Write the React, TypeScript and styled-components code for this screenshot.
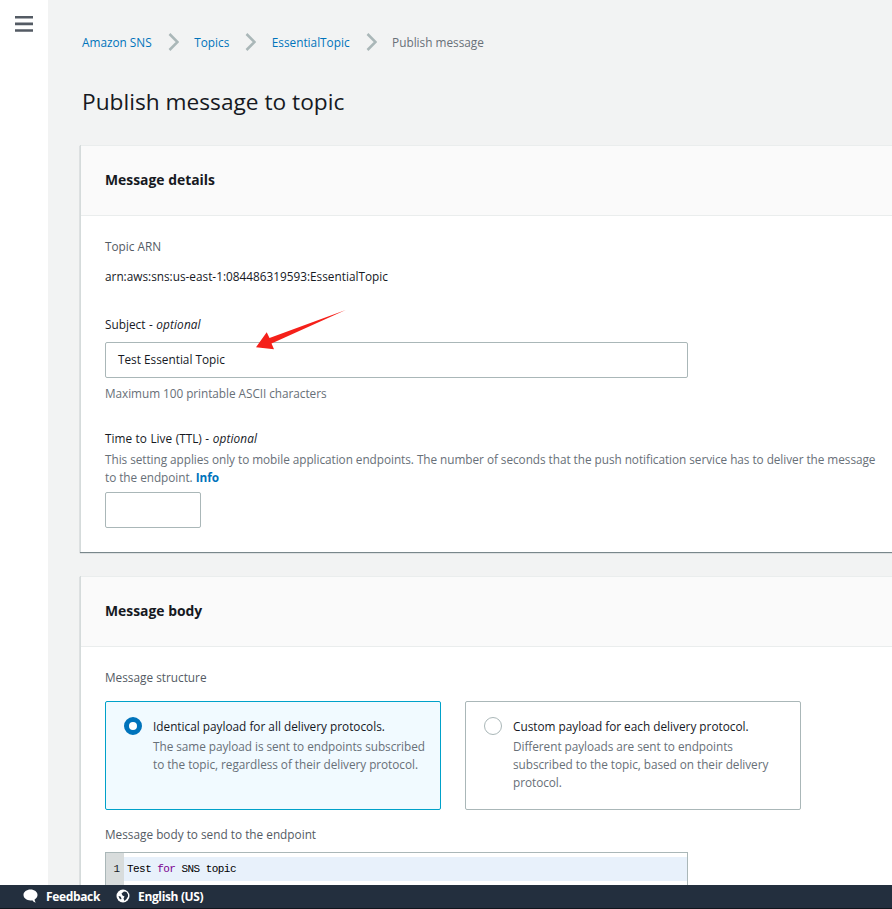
import styled, { createGlobalStyle } from 'styled-components'

const GlobalStyle = createGlobalStyle`
  html, body {
    margin: 0;
    padding: 0;
    height: 100%;
    overflow: hidden;
  }
  body {
    font-family: "Open Sans", "Noto Sans", sans-serif;
    font-size: 11.8px;
    color: #16191f;
  }
`

export default function App(): JSX.Element {
  return (
    <>
      <GlobalStyle />
      <Page>
        <Main>
          <SideBar>
            <svg width="18" height="16" viewBox="0 0 18 16">
              <path d="M0 0h18v2.6H0zM0 6.6h18v2.6H0zM0 13.2h18v2.6H0z" fill="#545b64" />
            </svg>
          </SideBar>
          <Content>
            <Breadcrumbs>
              <Crumb href="#">Amazon SNS</Crumb>
              <Chevron />
              <Crumb href="#">Topics</Crumb>
              <Chevron />
              <Crumb href="#">EssentialTopic</Crumb>
              <Chevron />
              <CurrentCrumb>Publish message</CurrentCrumb>
            </Breadcrumbs>
            <PageTitle>Publish message to topic</PageTitle>

            <Card>
              <CardHeader>Message details</CardHeader>
              <CardBody>
                <Label>Topic ARN</Label>
                <ArnValue>arn:aws:sns:us-east-1:084486319593:EssentialTopic</ArnValue>

                <SubjectField>
                  <FieldLabel>
                    Subject - <em>optional</em>
                  </FieldLabel>
                  <WideInput>Test Essential Topic</WideInput>
                  <Hint>Maximum 100 printable ASCII characters</Hint>
                  <Arrow width="90" height="40" viewBox="0 0 90 40">
                    <path d="M89.700 0L13.500 28L10.700 22.300L0 37.300L18 39.300L15.500 33.500Z" fill="#f5201a" />
                  </Arrow>
                </SubjectField>

                <TtlField>
                  <FieldLabel>
                    Time to Live (TTL) - <em>optional</em>
                  </FieldLabel>
                  <Description>
                    This setting applies only to mobile application endpoints. The number of seconds that the push
                    notification service has to deliver the message to the endpoint. <InfoLink href="#">Info</InfoLink>
                  </Description>
                  <SmallInput />
                </TtlField>
              </CardBody>
            </Card>

            <Card>
              <CardHeader>Message body</CardHeader>
              <CardBody>
                <Label>Message structure</Label>
                <Tiles>
                  <Tile $selected>
                    <Radio $selected />
                    <div>
                      <TileTitle>Identical payload for all delivery protocols.</TileTitle>
                      <TileText>
                        The same payload is sent to endpoints subscribed to the topic, regardless of their delivery
                        protocol.
                      </TileText>
                    </div>
                  </Tile>
                  <Tile>
                    <Radio />
                    <div>
                      <TileTitle>Custom payload for each delivery protocol.</TileTitle>
                      <TileText>
                        Different payloads are sent to endpoints subscribed to the topic, based on their delivery
                        protocol.
                      </TileText>
                    </div>
                  </Tile>
                </Tiles>
                <EditorLabel>Message body to send to the endpoint</EditorLabel>
                <Editor>
                  <Gutter>1</Gutter>
                  <CodeLine>
                    Test <Keyword>for</Keyword> SNS topic
                  </CodeLine>
                </Editor>
              </CardBody>
            </Card>
          </Content>
        </Main>
        <Footer>
          <FooterItem>
            <svg width="15" height="14" viewBox="0 0 15 14">
              <path
                d="M7.500 0.500C3.600 0.500 0.500 2.900 0.500 6C0.500 9.100 3.600 11.400 7.500 11.400C8.100 11.400 8.700 11.300 9.300 11.200C10 12.200 11.200 13.200 12.800 13.500C12 12.600 11.600 11.500 11.600 10.400C13.500 9.400 14.500 7.800 14.500 6C14.500 2.900 11.400 0.500 7.500 0.500Z"
                fill="#fff"
              />
            </svg>
            Feedback
          </FooterItem>
          <FooterItem>
            <svg width="14" height="14" viewBox="0 0 14 14">
              <circle cx="7" cy="7" r="6.500" fill="#fff" />
              <path
                d="M8 2.500L10.500 3L12 5.500L12 7.500L10.500 10L8.500 12L7.500 9.500L8.500 7.500L6.500 6.500L5.500 4.500ZM2.500 7L4.500 7.500L5.500 9.500L5 10.500L3.500 9.500Z"
                fill="#232f3e"
              />
            </svg>
            English (US)
          </FooterItem>
        </Footer>
      </Page>
    </>
  )
}

const Page = styled.div`
  display: flex;
  flex-direction: column;
  height: 909px;
  overflow: hidden;
`

const Main = styled.div`
  flex: 1;
  min-height: 0;
  display: flex;
  overflow: hidden;
`

const SideBar = styled.div`
  flex: 0 0 48px;
  padding: 16px 0 0 15px;
  box-sizing: border-box;
  background: #fff;

  svg {
    display: block;
  }
`

const Content = styled.main`
  flex: 1;
  min-width: 0;
  padding: 32px 0 0 32px;
  background: #f2f3f3;
`

const Breadcrumbs = styled.nav`
  display: flex;
  align-items: center;
  height: 20px;
  margin-left: 2px;
`

const Crumb = styled.a`
  color: #0073bb;
  text-decoration: none;
`

const CurrentCrumb = styled.span`
  color: #687078;
`

const ChevronIcon = styled.svg`
  margin: 0 15.500px 0 16px;
  flex: none;
`

function Chevron(): JSX.Element {
  return (
    <ChevronIcon width="11" height="18" viewBox="0 0 11 18">
      <path d="M1.500 1L9.500 9L1.500 17" fill="none" stroke="#aab7b8" strokeWidth="2.500" />
    </ChevronIcon>
  )
}

const PageTitle = styled.h1`
  margin: 34px 0 0 2px;
  font-size: 22.700px;
  line-height: 32px;
  font-weight: 400;
  color: #16191f;
`

const Card = styled.section`
  margin-top: 27px;
  background: #fff;
  border-left: 1px solid #d5dbdb;
  box-shadow: 0 1px 1px 0 rgba(0, 28, 36, 0.5);

  & + & {
    margin-top: 24px;
  }
`

const CardHeader = styled.h2`
  margin: 0;
  height: 71px;
  box-sizing: border-box;
  padding: 0 24px 3px;
  display: flex;
  align-items: center;
  background: #fafafa;
  border-top: 1px solid #eaeded;
  border-bottom: 1px solid #eaeded;
  font-size: 13.900px;
  font-weight: 700;
  color: #16191f;
`

const CardBody = styled.div`
  padding: 20px 0 24px 24px;
`

const Label = styled.div`
  line-height: 20px;
  color: #545b64;
`

const ArnValue = styled.div`
  margin-top: 10px;
  line-height: 20px;
`

const SubjectField = styled.div`
  position: relative;
  margin-top: 28px;
`

const FieldLabel = styled.div`
  line-height: 20px;
  color: #16191f;
  word-spacing: 0.500px;

  em {
    font-style: italic;
    letter-spacing: 0.120px;
  }
`

const Arrow = styled.svg`
  position: absolute;
  left: 151px;
  top: -4px;
`

const InputBox = styled.div`
  box-sizing: border-box;
  border: 1px solid #aab7b8;
  border-radius: 2px;
  background: #fff;
`

const WideInput = styled(InputBox)`
  width: 583px;
  height: 36px;
  margin-top: 8px;
  padding: 0 12px;
  line-height: 33px;
`

const Hint = styled.div`
  margin-top: 5px;
  line-height: 20px;
  color: #687078;
  letter-spacing: -0.050px;
`

const TtlField = styled.div`
  margin-top: 25px;
`

const Description = styled.div`
  margin-top: 2px;
  padding-right: 8px;
  line-height: 18px;
  color: #687078;
  letter-spacing: -0.050px;
`

const InfoLink = styled.a`
  color: #0073bb;
  font-weight: 700;
  text-decoration: none;
`

const SmallInput = styled(InputBox)`
  width: 96px;
  height: 36px;
  margin-top: 6px;
`

const Tiles = styled.div`
  display: flex;
  gap: 24px;
  margin-top: 14px;
`

const Tile = styled.div<{ $selected?: boolean }>`
  box-sizing: border-box;
  width: 336px;
  height: 109px;
  padding: 14px 12px 12px 18px;
  display: flex;
  gap: 11px;
  border: 1px solid ${(p) => (p.$selected ? '#00a1c9' : '#aab7b8')};
  border-radius: 2px;
  background: ${(p) => (p.$selected ? '#f1faff' : '#fff')};
`

const Radio = styled.span<{ $selected?: boolean }>`
  flex: none;
  box-sizing: border-box;
  width: 18px;
  height: 18px;
  margin-top: 1px;
  border-radius: 50%;
  background: #fff;
  border: ${(p) => (p.$selected ? '5px solid #0073bb' : '1px solid #aab7b8')};
`

const TileTitle = styled.div`
  line-height: 20px;
  color: #16191f;
`

const TileText = styled.div`
  margin-top: 1px;
  line-height: 18px;
  color: #687078;
  letter-spacing: -0.050px;
`

const EditorLabel = styled.div`
  margin-top: 14px;
  line-height: 20px;
  color: #545b64;
`

const Editor = styled.div`
  box-sizing: border-box;
  display: flex;
  width: 583px;
  height: 60px;
  margin-top: 8px;
  border: 1px solid #aab7b8;
  background: #fff;
`

const Gutter = styled.div`
  flex: 0 0 18px;
  padding: 4px 4px 0 0;
  box-sizing: border-box;
  background: #d8dcdc;
  text-align: right;
  font-family: "Liberation Mono", monospace;
  font-size: 11px;
  line-height: 24px;
`

const CodeLine = styled.div`
  flex: 1;
  height: 24px;
  margin-top: 4px;
  padding-left: 3px;
  background: #e8f1fb;
  color: #000;
  font-family: "Liberation Mono", monospace;
  font-size: 11px;
  letter-spacing: -0.550px;
  line-height: 24px;
  white-space: pre;
`

const Keyword = styled.span`
  color: #7a0090;
`

const Footer = styled.footer`
  flex: 0 0 24px;
  box-sizing: border-box;
  display: flex;
  align-items: center;
  gap: 16px;
  padding: 0 0 1px 23px;
  background: #232f3e;
  border-bottom: 1px solid #10161d;
`

const FooterItem = styled.div`
  display: flex;
  align-items: center;
  gap: 8px;
  color: #fff;
  font-weight: 700;
  font-size: 12px;
  letter-spacing: -0.350px;
`
